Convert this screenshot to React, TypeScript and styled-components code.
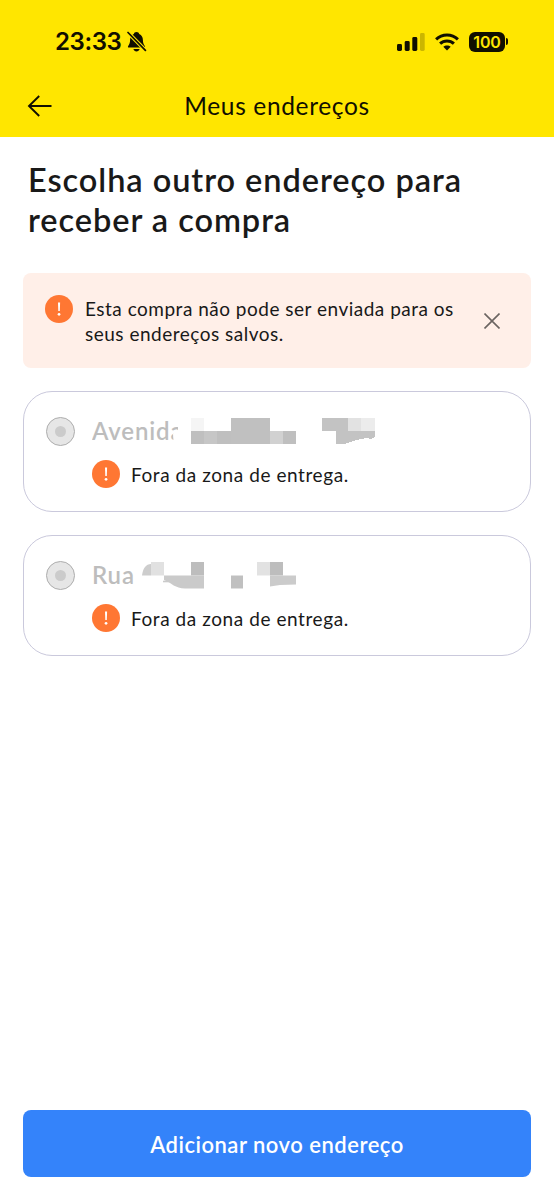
import React from "react";
import styled, { createGlobalStyle } from "styled-components";

const GlobalStyle = createGlobalStyle`
  * { box-sizing: border-box; }
  body { margin: 0; background: #fff; }
  button { border: 0; padding: 0; background: none; font: inherit; }
`;

const Screen = styled.div`
  width: 554px;
  height: 1200px;
  display: flex;
  flex-direction: column;
  background: #fff;
  color: #191919;
  font-family: Lato, sans-serif;
  overflow: hidden;
`;

const Header = styled.header`
  height: 137px;
  flex: none;
  background: #ffe600;
  color: #110f00;
`;

const StatusBar = styled.div`
  height: 76px;
  padding: 7px 46px 0 55px;
  display: flex;
  align-items: center;
  justify-content: space-between;
`;

const StatusGroup = styled.div<{ $gap: number }>`
  display: flex;
  align-items: center;
  gap: ${(p) => p.$gap}px;
  svg { display: block; }
`;

const Clock = styled.span`
  font: 600 24px/28px Inter, sans-serif;
  letter-spacing: -0.4px;
`;

const NavBar = styled.div`
  height: 60px;
  padding: 0 27px;
  display: grid;
  grid-template-columns: 26px 1fr 26px;
  align-items: center;
`;

const IconButton = styled.button`
  display: flex;
  color: inherit;
`;

const NavTitle = styled.h1`
  margin: 0;
  text-align: center;
  font-size: 24.5px;
  line-height: 30px;
  font-weight: 400;
  letter-spacing: 0.65px;
`;

const Content = styled.main`
  flex: 1;
  padding: 23px 23px 23px;
  display: flex;
  flex-direction: column;
`;

const Heading = styled.h2`
  margin: 0 0 34px 5px;
  font-size: 32.5px;
  line-height: 39.5px;
  font-weight: 600;
  letter-spacing: 0.95px;
  white-space: nowrap;
`;

const Notice = styled.section`
  height: 95px;
  padding: 22px 31px 0 22px;
  display: flex;
  align-items: flex-start;
  border-radius: 8px;
  background: #ffefe8;
`;

const NoticeText = styled.p`
  margin: 1px 0 0 12px;
  flex: 1;
  font-size: 19px;
  line-height: 25px;
  letter-spacing: 0.5px;
  white-space: nowrap;
`;

const CloseButton = styled(IconButton)`
  margin-top: 18px;
  color: #6b6461;
`;

const AddressList = styled.div`
  margin-top: 23px;
  display: flex;
  flex-direction: column;
  gap: 23px;
`;

const AddressCard = styled.article`
  height: 121px;
  padding: 22px;
  display: flex;
  gap: 17px;
  border: 1px solid #cac9dc;
  border-radius: 29px;
`;

const Radio = styled.span`
  width: 29px;
  height: 29px;
  margin-top: 3px;
  flex: none;
  display: grid;
  place-items: center;
  border: 1.5px solid #adadad;
  border-radius: 50%;
  background: #e6e6e6;
  &::after {
    content: "";
    width: 11px;
    height: 11px;
    border-radius: 50%;
    background: #cbcbcb;
  }
`;

const AddressBody = styled.div`
  display: flex;
  flex-direction: column;
  gap: 12px;
`;

const AddressLine = styled.div`
  height: 34px;
  display: flex;
  align-items: center;
`;

const Street = styled.span<{ $width: number; $clip?: string }>`
  width: ${(p) => p.$width}px;
  flex: none;
  color: #bdbdbd;
  font-size: 24px;
  line-height: 34px;
  font-weight: 600;
  letter-spacing: 0.85px;
  white-space: nowrap;
  clip-path: ${(p) => p.$clip ?? "none"};
`;

const Warning = styled.div`
  height: 28px;
  display: flex;
  align-items: center;
  gap: 11px;
  font-size: 19px;
  line-height: 28px;
  letter-spacing: 0.57px;
  span { padding-top: 1px; }
`;

const AddButton = styled.button`
  height: 67px;
  margin-top: auto;
  padding-top: 1px;
  border-radius: 8px;
  background: #3483fa;
  color: #fff;
  font-size: 22px;
  font-weight: 600;
  letter-spacing: 0.5px;
`;

const BellOff = () => (
  <svg width="20" height="22" viewBox="0 0 20 22">
    <path d="M9.5 1C7.9 1 7.1 1.8 6.8 3 4.2 4.1 3.2 6.3 3.1 9.1 3 12.2 2.3 13.6 1.2 15 0.7 15.7 0.9 16.6 1.8 16.6H17.2C18.1 16.6 18.3 15.7 17.8 15 16.6 13.6 16 12.2 15.9 9.1 15.8 6.3 14.8 4.1 12.2 3 11.9 1.8 11.1 1 9.5 1ZM6.4 18H12.6C12.2 19.5 11 20.4 9.5 20.4S6.8 19.5 6.4 18Z" fill="currentColor" />
    <path d="M0 0.5 19.5 20.5" stroke="#ffe600" strokeWidth="3.7" />
    <path d="M1 1.5 18.4 19.4" stroke="currentColor" strokeWidth="1.7" strokeLinecap="round" />
  </svg>
);

const Signal = () => (
  <svg width="28" height="18" viewBox="0 0 28 18" fill="currentColor">
    <rect x="0" y="11" width="5" height="7" rx="1.4" />
    <rect x="7.7" y="8" width="5" height="10" rx="1.4" />
    <rect x="15.3" y="4" width="5" height="14" rx="1.4" />
    <rect x="23" y="0" width="4.7" height="18" rx="1.4" opacity="0.22" />
  </svg>
);

const Wifi = () => (
  <svg width="24" height="18" viewBox="0 0 24 18">
    <g fill="none" stroke="currentColor" strokeWidth="3">
      <path d="M1.1 6.4C7.2 0.5 16.8 0.5 22.9 6.4" />
      <path d="M5.1 10.7C9 7 15 7 18.9 10.7" />
    </g>
    <path d="M12 17.5 8.3 13.8C10.3 12 13.7 12 15.7 13.8Z" fill="currentColor" />
  </svg>
);

const BatteryIcon = styled.div`
  width: 36px;
  height: 20px;
  border-radius: 6px;
  background: currentColor;
  display: flex;
  align-items: center;
  justify-content: center;
`;

const BatteryLevel = styled.span`
  color: #ffe600;
  font: 600 16px/20px Inter, sans-serif;
  letter-spacing: -0.2px;
`;

const BatteryCap = styled.span`
  width: 2px;
  height: 7px;
  margin-left: 1px;
  border-radius: 0 3px 3px 0;
  background: currentColor;
`;

const BackArrow = () => (
  <svg width="26" height="24" viewBox="0 0 26 24" fill="none" stroke="currentColor" strokeWidth="1.9">
    <path d="M24.5 12H2M12.2 2 2 12 12.2 22" />
  </svg>
);

const Cross = () => (
  <svg width="16" height="16" viewBox="0 0 16 16" stroke="currentColor" strokeWidth="1.6">
    <path d="M0.5 0.5 15.5 15.5M15.5 0.5 0.5 15.5" />
  </svg>
);

const AlertIcon = () => (
  <svg width="28" height="28" viewBox="0 0 28 28">
    <circle cx="14" cy="14" r="14" fill="#ff7733" />
    <path d="M13 7.5H15.1L14.8 16H13.3Z" fill="#fff" />
    <circle cx="14.05" cy="19.3" r="1.35" fill="#fff" />
  </svg>
);

const AvenueMosaic = () => (
  <svg width="186" height="27" viewBox="0 0 186 27" shapeRendering="crispEdges">
    <path d="M0 0H13V13H0Z" fill="#f5f5f5" />
    <path d="M40 0H79V26H40Z" fill="#c0c0c0" />
    <path d="M0 13H13V26H0ZM26 13H40V26H26ZM92 13H105V26H92Z" fill="#bfbfbf" />
    <path d="M13 13H26V26H13Z" fill="#c6c6c6" />
    <path d="M79 13H92V26H79Z" fill="#d1d1d1" />
    <path d="M131 0H157V13H184V19Q180 22 177 20 171 20 153 26H145V13H131Z" fill="#c3c3c3" />
    <path d="M157 0H170V13H157Z" fill="#e2e2e2" />
    <path d="M170 0H184V13H170Z" fill="#ececec" />
  </svg>
);

const StreetMosaic = () => (
  <svg width="154" height="27" viewBox="0 0 154 27">
    <path d="M0 13.5C1 6 4 2 9 2V13.5Z" fill="#cdcdcd" />
    <path d="M9 0H22V13.5H9Z" fill="#e1e1e1" />
    <path d="M49 0H62V13.5H49Z" fill="#bdbdbd" />
    <path d="M22 13.5H62V26.5H43C33 26.5 30 21 22 18Z" fill="#cacaca" />
    <path d="M21 19.5H28" stroke="#cacaca" strokeWidth="1.6" />
    <path d="M89 13.5H101V26.5H89Z" fill="#c0c0c0" />
    <path d="M115 0H128V13.5H115Z" fill="#e2e2e2" />
    <path d="M128 0H141V13.5H128Z" fill="#bdbdbd" />
    <path d="M128 13.5H154V22.5L138 23 128 24.5Z" fill="#cbcbcb" />
  </svg>
);

const UnavailableAddress = ({ name, width, clip, children }: {
  name: string; width: number; clip?: string; children: React.ReactNode;
}) => (
  <AddressCard>
    <Radio />
    <AddressBody>
      <AddressLine>
        <Street $width={width} $clip={clip}>{name}</Street>
        {children}
      </AddressLine>
      <Warning><AlertIcon /><span>Fora da zona de entrega.</span></Warning>
    </AddressBody>
  </AddressCard>
);

export default function App() {
  return (
    <Screen>
      <GlobalStyle />
      <Header>
        <StatusBar>
          <StatusGroup $gap={6}><Clock>23:33</Clock><BellOff /></StatusGroup>
          <StatusGroup $gap={10}>
            <Signal />
            <Wifi />
            <StatusGroup $gap={0}>
              <BatteryIcon><BatteryLevel>100</BatteryLevel></BatteryIcon>
              <BatteryCap />
            </StatusGroup>
          </StatusGroup>
        </StatusBar>
        <NavBar>
          <IconButton aria-label="Voltar"><BackArrow /></IconButton>
          <NavTitle>Meus endereços</NavTitle>
        </NavBar>
      </Header>
      <Content>
        <Heading>Escolha outro endereço para<br />receber a compra</Heading>
        <Notice>
          <AlertIcon />
          <NoticeText>Esta compra não pode ser enviada para os<br />seus endereços salvos.</NoticeText>
          <CloseButton aria-label="Fechar"><Cross /></CloseButton>
        </Notice>
        <AddressList>
          <UnavailableAddress name="Avenida" width={99} clip="polygon(0 0, 86px 0, 86px 16px, 81px 20px, 82px 34px, 0 34px)">
            <AvenueMosaic />
          </UnavailableAddress>
          <UnavailableAddress name="Rua" width={50}>
            <StreetMosaic />
          </UnavailableAddress>
        </AddressList>
        <AddButton>Adicionar novo endereço</AddButton>
      </Content>
    </Screen>
  );
}
